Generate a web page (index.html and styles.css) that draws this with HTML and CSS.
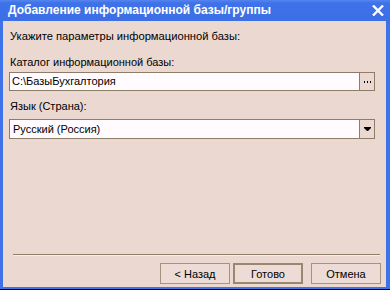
FILE: index.html
```html
<!DOCTYPE html>
<html>
<head>
    <title>Добавление информационной базы/группы</title>
    <link rel="stylesheet" href="styles.css">
</head>
<body>
    <div class="window">
        <!-- Title bar -->
        <div class="titlebar">
            <span class="title">Добавление информационной базы/группы</span>
            <svg class="close" width="12" height="11" viewBox="0 0 12 11">
                <path d="M1 0.5 L11 10.5 M11 0.5 L1 10.5" stroke="#fff" stroke-width="2.4"/>
            </svg>
        </div>

        <!-- Dialog content -->
        <div class="content">
            <div class="label first">Укажите параметры информационной базы:</div>

            <div class="label">Каталог информационной базы:</div>
            <div class="field">
                <div class="field-text">C:\БазыБухгалтория</div>
                <div class="field-btn">
                    <svg width="7" height="2" viewBox="0 0 7 2">
                        <rect x="0" y="0" width="1" height="2" fill="#000"/>
                        <rect x="3" y="0" width="1" height="2" fill="#000"/>
                        <rect x="6" y="0" width="1" height="2" fill="#000"/>
                    </svg>
                </div>
            </div>

            <div class="label gap">Язык (Страна):</div>
            <div class="field select">
                <div class="field-text">Русский (Россия)</div>
                <div class="field-btn">
                    <svg width="7" height="5" viewBox="0 0 7 5">
                        <path d="M0 0 H7 V1 L4 4 H3 L0 1 Z" fill="#000"/>
                    </svg>
                </div>
            </div>

            <!-- Footer -->
            <div class="footer">
                <div class="separator"></div>
                <div class="buttons">
                    <button class="btn">&lt; Назад</button>
                    <button class="btn default">Готово</button>
                    <button class="btn cancel">Отмена</button>
                </div>
            </div>
        </div>
    </div>
</body>
</html>
```

FILE: styles.css
```css
body {
    margin: 0;
    padding: 0;
    width: 390px;
    height: 290px;
    overflow: hidden;
    background: #000;
    font-family: 'Liberation Sans', Arial, sans-serif;
    font-size: 11px;
    color: #000;
}

/* Window frame */
.window {
    width: 390px;
    height: 289px;
    box-sizing: border-box;
    background: #3f72e8;
    border-left: 3px solid #3f72e8;
    border-right: 4px solid #3f72e8;
    border-bottom: 2px solid #3f72e8;
    display: flex;
    flex-direction: column;
}

.titlebar {
    height: 20px;
    flex: none;
    display: flex;
    align-items: center;
    justify-content: space-between;
    background: linear-gradient(#5585ee 0, #3f72e8 3px, #3c6fe6 100%);
    margin: 0 -4px 0 -3px;
    padding: 0 6px 1px 8px;
}
.title {
    color: #fff;
    font-weight: bold;
    font-size: 12px;
}
.close {
    display: block;
    margin-top: 1px;
}

/* Content */
.content {
    flex: 1;
    background: #ebd8d0;
    padding: 8px 11px 3px 6px;
    display: flex;
    flex-direction: column;
}

.label {
    line-height: 14px;
    padding-left: 1px;
    margin-top: 12px;
    margin-bottom: 3px;
}
.label.first {
    margin-top: 0;
    margin-bottom: 0;
    font-size: 11.2px;
}
.label.gap {
    margin-top: 8px;
    margin-bottom: 6px;
}

.field {
    height: 19px;
    box-sizing: border-box;
    border: 1px solid #8c7c68;
    background: #fffbff;
    display: flex;
}
.field.select {
    height: 20px;
}
.field-text {
    flex: 1;
    line-height: 17px;
    padding-left: 2px;
}
.field.select .field-text {
    padding-left: 3px;
    line-height: 18px;
}
.field-btn {
    width: 14px;
    border-left: 1px solid #8c7c68;
    background: #ebd8d0;
    display: flex;
    align-items: center;
    justify-content: center;
}
.field-btn svg {
    display: block;
}

/* Footer */
.footer {
    margin-top: auto;
    margin-right: -6px;
}
.separator {
    height: 1px;
    background: #8f7f69;
    border-bottom: 1px solid #f6ece8;
    margin-left: 4px;
    margin-right: 1px;
}
.buttons {
    display: flex;
    justify-content: flex-end;
    margin-top: 7px;
}
.btn {
    width: 70px;
    height: 21px;
    box-sizing: border-box;
    border: 1px solid #a4937e;
    background: #eddcd5;
    font-family: 'Liberation Sans', Arial, sans-serif;
    font-size: 11px;
    color: #000;
    padding: 0;
    margin-left: 3px;
}
.btn.default {
    border: 2px solid #9a8770;
}
.btn.cancel {
    margin-left: 8px;
}
```
